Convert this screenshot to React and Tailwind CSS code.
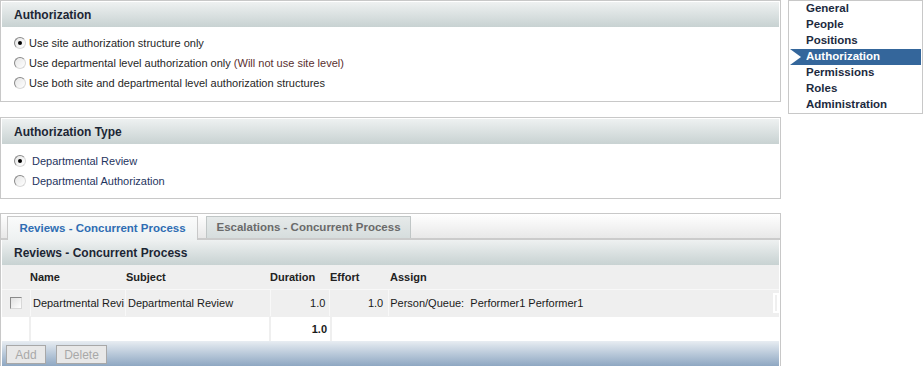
import React from "react";

const navItems = ["General", "People", "Positions", "Authorization", "Permissions", "Roles", "Administration"];

function Radio({ checked }) {
  return (
    <span className="w-[12px] h-[12px] rounded-full border border-[#8a8a8a] border-r-[#d8d8d8] border-b-[#d8d8d8] bg-linear-to-br from-[#e6e6e6] to-white flex items-center justify-center shrink-0">
      {checked && <span className="w-[4px] h-[4px] rounded-full bg-black" />}
    </span>
  );
}

function Header({ children }) {
  return (
    <div className="h-[25px] flex items-center pl-[12px] bg-linear-to-b from-[#eef1f1] to-[#c8d2d2] text-[12px] font-bold text-[#1c2634]">
      {children}
    </div>
  );
}

function Option({ checked, children, color = "text-[#262626]", gap = "gap-[3px]" }) {
  return (
    <div className={`h-[20px] flex items-center pl-[12px] text-[11px] ${gap} ${color}`}>
      <Radio checked={checked} />
      <span>{children}</span>
    </div>
  );
}

export default function App() {
  return (
    <div className="w-[923px] h-[366px] bg-white flex overflow-hidden font-['Liberation_Sans',Arial,sans-serif]">
      <div className="w-[781px] shrink-0 flex flex-col">
        <div className="h-[102px] border border-[#c8c8c8] p-px">
          <Header>Authorization</Header>
          <div className="pt-[6px]">
            <Option checked>Use site authorization structure only</Option>
            <Option>
              Use departmental level authorization only <span className="text-[#5a2f2f]">(Will not use site level)</span>
            </Option>
            <Option>Use both site and departmental level authorization structures</Option>
          </div>
        </div>

        <div className="mt-[15px] h-[82px] border border-[#c8c8c8] p-px">
          <Header>Authorization Type</Header>
          <div className="pt-[7px]">
            <Option checked color="text-[#1f3560]" gap="gap-[6px]">Departmental Review</Option>
            <Option color="text-[#1f3560]" gap="gap-[6px]">Departmental Authorization</Option>
          </div>
        </div>

        <div className="mt-[14px] flex-1 border border-[#c8c8c8] border-b-0 flex flex-col">
          <div className="h-[26px] flex items-end gap-[8px] pl-[6px] bg-linear-to-b from-white to-[#e8e8e8] border-b-2 border-[#cbcbcb]">
            <div className="h-[24px] -mb-[2px] w-[191px] border border-b-0 border-[#c8c8c8] bg-linear-to-b from-[#fafbfb] to-[#eef1f1] flex items-center justify-center text-[11.5px] font-bold text-[#2f6db3]">
              Reviews - Concurrent Process
            </div>
            <div className="h-[22px] w-[205px] border border-b-0 border-[#c0c6c6] bg-linear-to-b from-[#e6eaea] to-[#d6dddd] flex items-center justify-center text-[11.5px] font-bold text-[#6a6a6a]">
              Escalations - Concurrent Process
            </div>
          </div>
          <div className="mx-px">
            <Header>Reviews - Concurrent Process</Header>
          </div>
          <div className="mx-px bg-[#efefef] text-[11px] text-[#1a1a1a]">
            <div className="h-[24px] flex items-center font-bold text-[#222]">
              <div className="w-[28px]" />
              <div className="w-[96px]">Name</div>
              <div className="w-[144px]">Subject</div>
              <div className="w-[60px]">Duration</div>
              <div className="w-[60px]">Effort</div>
              <div>Assign</div>
            </div>
            <div className="h-[27px] flex gap-[2px] border-t border-[#f8f8f8]">
              <div className="w-[26px] flex items-center justify-center pl-[3px]">
                <span className="w-[12px] h-[12px] border border-[#8a8a8a] border-r-[#d8d8d8] border-b-[#d8d8d8] bg-linear-to-br from-[#e0e0e0] to-white" />
              </div>
              <div className="w-[93px] flex items-center pl-[2px] whitespace-nowrap border-l border-[#f8f8f8]">Departmental Revi</div>
              <div className="w-[143px] flex items-center pl-[2px] border-l border-[#f8f8f8]">Departmental Review</div>
              <div className="w-[58px] flex items-center justify-end pr-[2px] border-l border-[#f8f8f8]">1.0</div>
              <div className="w-[57px] flex items-center justify-end pr-[3px] border-l border-[#f8f8f8]">1.0</div>
              <div className="w-[384px] flex items-center pl-[1px] border-l border-[#f8f8f8]">Person/Queue:&nbsp; Performer1 Performer1</div>
              <div className="w-[6px] my-[3px] border-2 border-white" />
            </div>
            <div className="h-[25px] flex gap-[2px] pt-px">
              <div className="w-[27px] bg-white" />
              <div className="w-[238px] bg-white" />
              <div className="w-[59px] bg-white flex items-center justify-end pr-[3px] font-bold">1.0</div>
              <div className="flex-1 bg-white" />
            </div>
          </div>
          <div className="mx-px flex-1 flex items-start gap-[10px] pl-[4px] pt-[4px] bg-linear-to-b from-[#e8edf2] to-[#8ea7c2]">
            <div className="h-[19px] w-[40px] border border-[#a8a8a8] bg-[#e8e8e8] flex items-center justify-center text-[12px] text-[#a8a8a8]">Add</div>
            <div className="h-[19px] w-[51px] border border-[#a8a8a8] bg-[#e8e8e8] flex items-center justify-center text-[12px] text-[#a8a8a8]">Delete</div>
          </div>
        </div>
      </div>

      <div className="ml-[7px] w-[135px] h-[114px] border border-[#c8c8c8] px-px text-[11.5px] font-bold text-[#1c2a40]">
        {navItems.map((item) => (
          <div
            key={item}
            className={`relative h-[16px] flex items-center pl-[16px] ${item === "Authorization" ? "bg-[#34669b] text-white" : ""}`}
          >
            {item === "Authorization" && (
              <span className="absolute left-0 top-0 w-0 h-0 border-t-[8px] border-b-[8px] border-l-[11px] border-t-transparent border-b-transparent border-l-white" />
            )}
            {item}
          </div>
        ))}
      </div>
    </div>
  );
}
